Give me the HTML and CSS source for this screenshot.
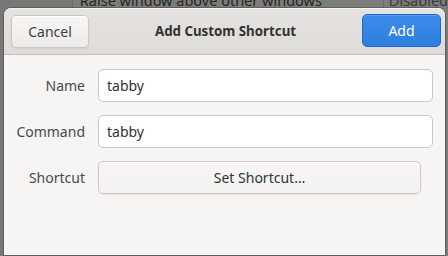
FILE: index.html
```html
<!DOCTYPE html>
<html>
<head>
<meta charset="utf-8">
<link rel="stylesheet" href="styles.css">
</head>
<body>
<div class="screen">
  <div class="backdrop">
    <div class="bd-side"></div>
    <div class="bd-main">
      <div class="bd-row">
        <span class="bd-label">Raise window above other windows</span>
        <span class="bd-value">Disabled</span>
      </div>
    </div>
  </div>
  <div class="dialog">
    <header class="headerbar">
      <button class="btn">Cancel</button>
      <div class="title">Add Custom Shortcut</div>
      <button class="btn btn-suggested">Add</button>
    </header>
    <div class="content">
      <div class="form">
        <label class="lbl">Name</label>
        <div class="entry">tabby</div>
        <label class="lbl">Command</label>
        <div class="entry">tabby</div>
        <label class="lbl">Shortcut</label>
        <button class="btn btn-set">Set Shortcut…</button>
      </div>
    </div>
  </div>
</div>
</body>
</html>
```
FILE: styles.css
```css
* { box-sizing: border-box; }
html, body {
  margin: 0;
  padding: 0;
  width: 448px;
  height: 256px;
  overflow: hidden;
  font-family: "Noto Sans", "DejaVu Sans", sans-serif;
  font-size: 14px;
  color: #2e3436;
}
.screen {
  position: relative;
  width: 448px;
  height: 256px;
  background: #7b7b7a;
}
.backdrop {
  display: flex;
  height: 256px;
}
.bd-side {
  width: 95px;
  background: #777776;
  border-right: 1px solid #6a6a69;
}
.bd-main {
  flex: 1;
  background: #7c7c7b;
}
.bd-row {
  display: flex;
  height: 20px;
  margin-top: -10px;
  line-height: 20px;
  font-size: 14.5px;
  color: #262626;
}
.bd-label {
  padding-left: 7px;
  width: 311px;
  border-right: 1px solid #6a6a69;
  white-space: nowrap;
}
.bd-value {
  padding-left: 5px;
  color: #3a3a3a;
}
.dialog {
  position: absolute;
  left: 3px;
  top: 7px;
  width: 443px;
  height: 249px;
  background: #f6f5f4;
  border: 1px solid #5e5e5d;
  border-radius: 8px 8px 0 0;
  overflow: hidden;
  display: flex;
  flex-direction: column;
}
.headerbar {
  display: flex;
  align-items: center;
  justify-content: space-between;
  height: 47px;
  padding: 0 4px 0 7px;
  background: linear-gradient(#e5e2df, #dedbd8);
  border-bottom: 1px solid #c0bcb7;
  border-radius: 7px 7px 0 0;
  box-shadow: inset 0 1px #f4f3f2;
}
.title {
  font-weight: bold;
  font-size: 13.3px;
  color: #2e3436;
}
.btn {
  font-family: inherit;
  font-size: 14px;
  color: #2e3436;
  height: 33px;
  border: 1px solid #cdc7c2;
  border-radius: 5px;
  background: linear-gradient(#f7f6f5, #edebe9);
  box-shadow: inset 0 1px #ffffff, 0 1px 2px rgba(0,0,0,0.07);
  padding: 0 16px;
  margin: 0;
}
.headerbar .btn:first-child {
  width: 78px;
  color: #3a3f41;
}
.btn-suggested {
  width: 79px;
  background: linear-gradient(#3b8ae8, #2f7fe0);
  border-color: #1b6acb;
  color: #ffffff;
  box-shadow: inset 0 1px #5e9ded;
  margin-top: -1px;
}
.content {
  flex: 1;
  padding: 14px 0 0 0;
}
.form {
  display: grid;
  grid-template-columns: 81px 335px;
  column-gap: 13px;
  row-gap: 13px;
  align-items: center;
}
.lbl {
  text-align: right;
  color: #444a4c;
}
.entry {
  height: 33px;
  line-height: 31px;
  padding: 0 8px;
  background: #ffffff;
  border: 1px solid #cdc7c2;
  border-radius: 5px;
  color: #2e3436;
}
.btn-set {
  width: 323px;
  text-align: center;
  background: linear-gradient(#f6f5f4, #f3f2f0);
}
```
